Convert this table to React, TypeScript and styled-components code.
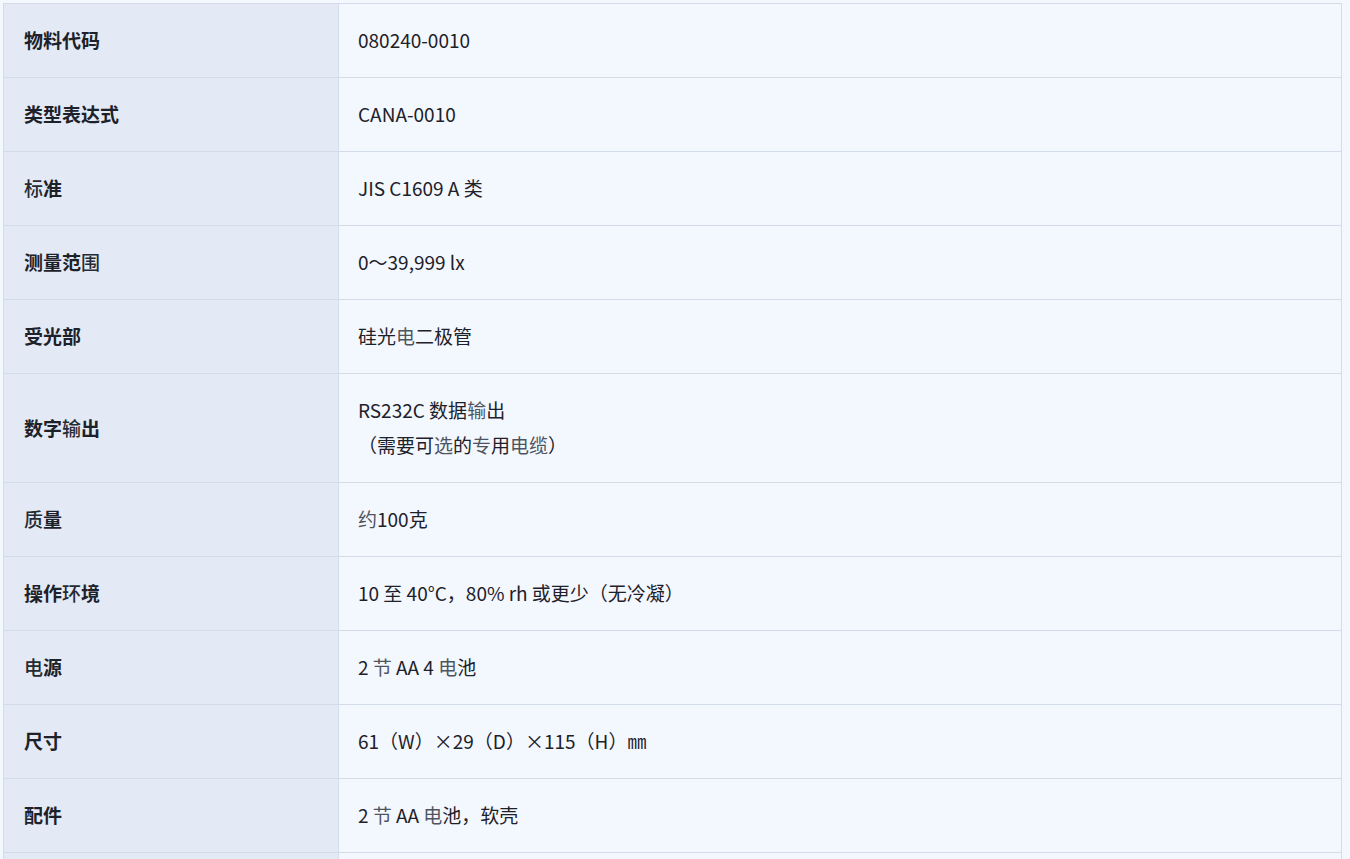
import styled, { createGlobalStyle } from 'styled-components'
import type { ReactNode } from 'react'

const GlobalStyle = createGlobalStyle`
  body {
    margin: 3px;
    background: #f3f7fe;
    font-family: 'Noto Sans CJK SC', 'Noto Sans', sans-serif;
    color: #1d2129;
  }
`

const SpecTable = styled.table`
  width: 1339px;
  border-collapse: collapse;
  font-size: 19px;
  line-height: 34px;
  td {
    border: 1px solid #d3dde9;
    padding: 19px 20px 20px;
    vertical-align: middle;
  }
`

const Label = styled.td`
  width: 294px;
  background: #e3eaf5;
  font-weight: 700;
`

const Value = styled.td`
  background: #f3f7fe;
  && {
    padding-left: 19px;
  }
`

// a few glyphs come out lighter in the reference (fallback weight)
const Faint = styled.span<{ $strong?: boolean }>`
  font-weight: ${(p) => (p.$strong ? 500 : 400)};
  color: ${(p) => (p.$strong ? '#262b33' : '#4e5560')};
`

const Note = styled.div`
  margin-top: 1px;
`

type Spec = { label: ReactNode; value: ReactNode }

const specs: Spec[] = [
  { label: '物料代码', value: '080240-0010' },
  { label: '类型表达式', value: 'CANA-0010' },
  { label: <><Faint $strong>标</Faint>准</>, value: 'JIS C1609 A 类' },
  { label: <>测量范<Faint $strong>围</Faint></>, value: '0～39,999 lx' },
  { label: '受光部', value: <>硅光<Faint>电</Faint>二极管</> },
  {
    label: <>数字<Faint $strong>输</Faint>出</>,
    value: (
      <>
        RS232C 数据<Faint>输</Faint>出
        <Note>（需要可<Faint>选</Faint>的<Faint>专</Faint>用<Faint>电缆</Faint>）</Note>
      </>
    ),
  },
  { label: <><Faint $strong>质</Faint>量</>, value: <><Faint>约</Faint>100克</> },
  { label: <>操作<Faint $strong>环</Faint>境</>, value: '10 至 40°C，80% rh 或更少（无冷凝）' },
  { label: <><Faint $strong>电</Faint>源</>, value: <>2 <Faint>节</Faint> AA 4 <Faint>电</Faint>池</> },
  { label: '尺寸', value: '61（W）×29（D）×115（H）㎜' },
  { label: '配件', value: <>2 <Faint>节</Faint> AA <Faint>电</Faint>池，软壳</> },
  { label: '\u00a0', value: '\u00a0' },
]

export default function App() {
  return (
    <>
      <GlobalStyle />
      <SpecTable>
        <tbody>
          {specs.map((s, i) => (
            <tr key={i}>
              <Label>{s.label}</Label>
              <Value>{s.value}</Value>
            </tr>
          ))}
        </tbody>
      </SpecTable>
    </>
  )
}
